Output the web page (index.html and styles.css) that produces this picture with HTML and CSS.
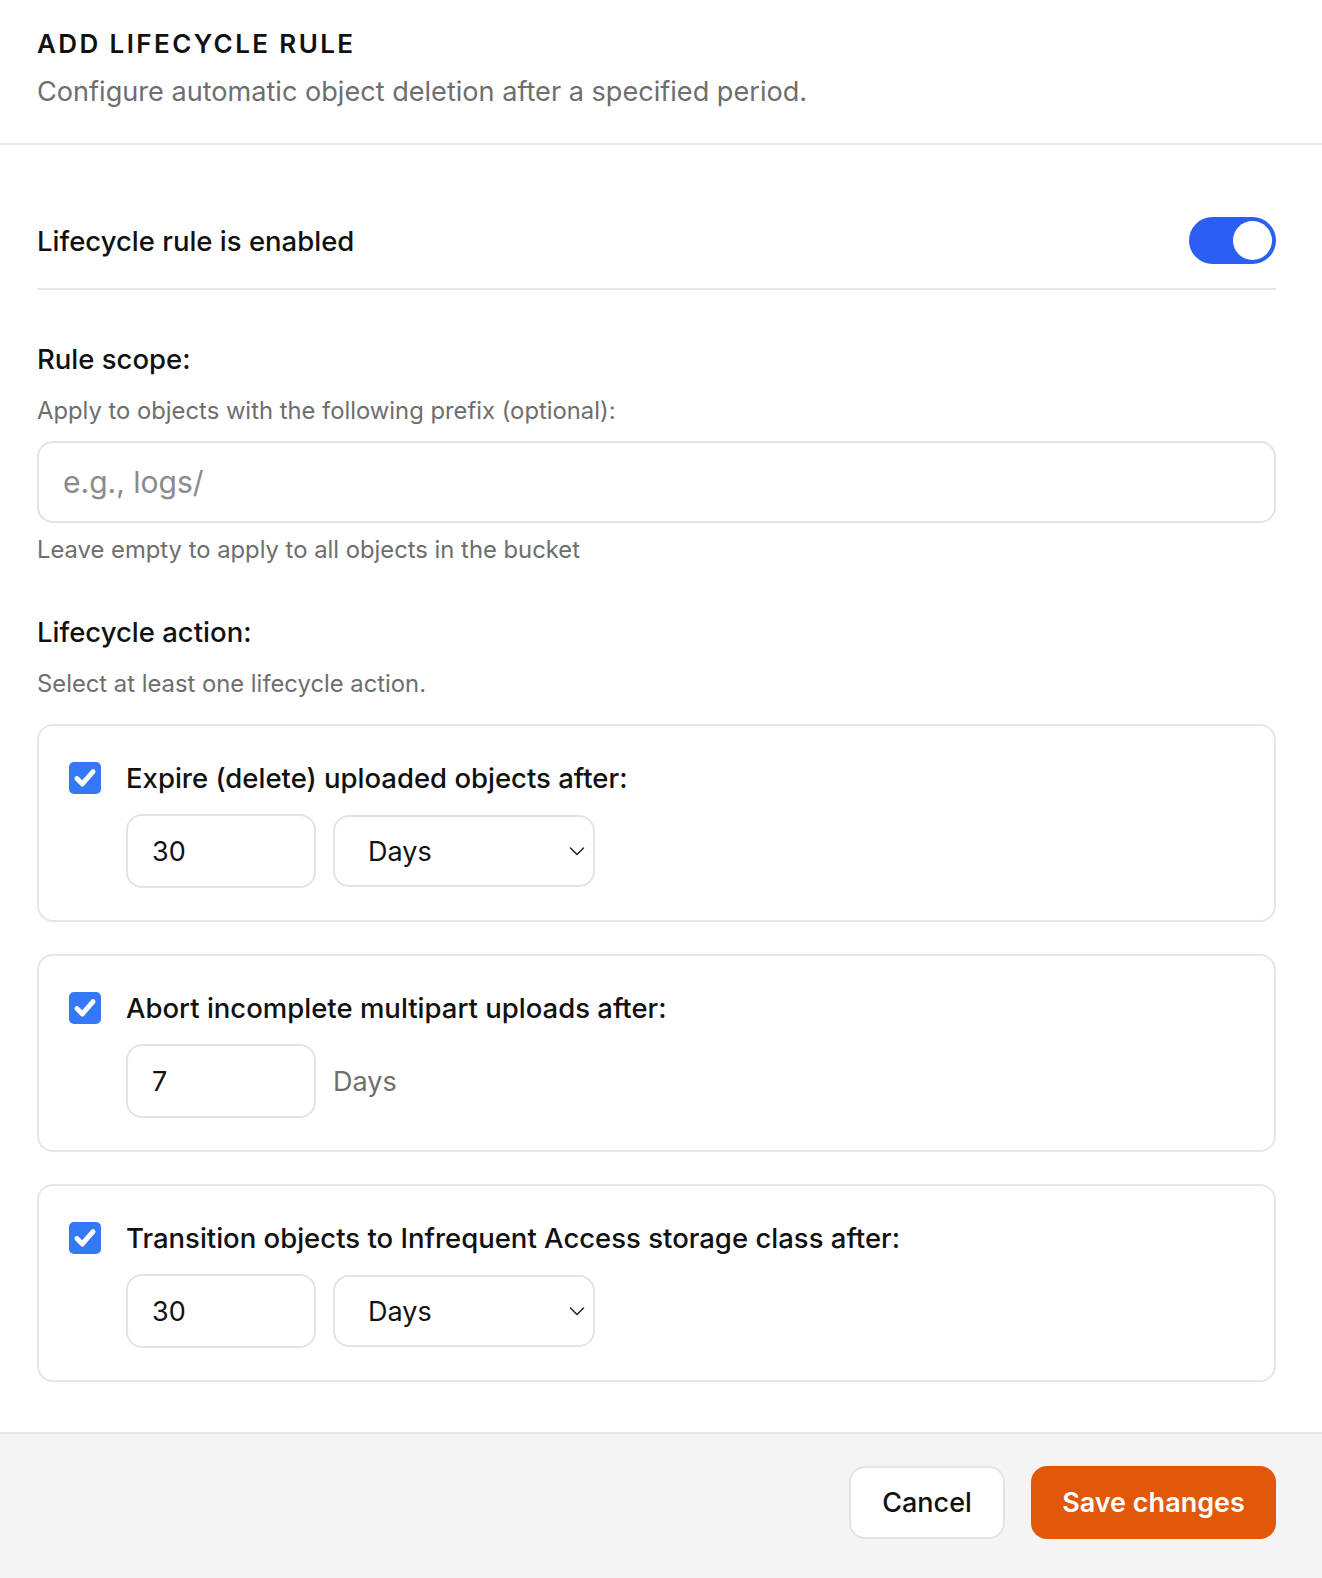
FILE: index.html
```html
<!DOCTYPE html>
<html lang="en">
<head>
    <meta charset="UTF-8">
    <meta name="viewport" content="width=device-width, initial-scale=1.0">
    <title>Add lifecycle rule</title>
    <link rel="stylesheet" href="styles.css">
</head>
<body>
    <div class="modal">
        <header class="modal-header">
            <h1>ADD LIFECYCLE RULE</h1>
            <p>Configure automatic object deletion after a specified period.</p>
        </header>

        <main class="modal-body">
            <div class="enable-row">
                <span>Lifecycle rule is enabled</span>
                <span class="toggle on"><span class="knob"></span></span>
            </div>

            <section class="field">
                <h2>Rule scope:</h2>
                <p class="hint">Apply to objects with the following prefix (optional):</p>
                <input class="text-input" type="text" placeholder="e.g., logs/">
                <p class="hint below">Leave empty to apply to all objects in the bucket</p>
            </section>

            <section class="field">
                <h2>Lifecycle action:</h2>
                <p class="hint">Select at least one lifecycle action.</p>

                <div class="action-card">
                    <label class="action-title">
                        <span class="checkbox"><svg viewBox="0 0 16 16"><path d="M3.4 8.3 6.5 11.4 12.6 4.4" /></svg></span>
                        Expire (delete) uploaded objects after:
                    </label>
                    <div class="action-inputs">
                        <input class="num-input" type="text" value="30">
                        <div class="select">Days
                            <svg viewBox="0 0 16 10"><path d="M1.5 2 8 8.5 14.5 2" /></svg>
                        </div>
                    </div>
                </div>

                <div class="action-card">
                    <label class="action-title">
                        <span class="checkbox"><svg viewBox="0 0 16 16"><path d="M3.4 8.3 6.5 11.4 12.6 4.4" /></svg></span>
                        Abort incomplete multipart uploads after:
                    </label>
                    <div class="action-inputs">
                        <input class="num-input" type="text" value="7">
                        <span class="unit">Days</span>
                    </div>
                </div>

                <div class="action-card">
                    <label class="action-title">
                        <span class="checkbox"><svg viewBox="0 0 16 16"><path d="M3.4 8.3 6.5 11.4 12.6 4.4" /></svg></span>
                        Transition objects to Infrequent Access storage class after:
                    </label>
                    <div class="action-inputs">
                        <input class="num-input" type="text" value="30">
                        <div class="select">Days
                            <svg viewBox="0 0 16 10"><path d="M1.5 2 8 8.5 14.5 2" /></svg>
                        </div>
                    </div>
                </div>
            </section>
        </main>

        <footer class="modal-footer">
            <button class="btn cancel">Cancel</button>
            <button class="btn primary">Save changes</button>
        </footer>
    </div>
</body>
</html>
```

FILE: styles.css
```css
* {
    margin: 0;
    padding: 0;
    box-sizing: border-box;
}

html,
body {
    overflow: hidden;
}

body {
    font-family: 'Inter', 'Noto Sans', sans-serif;
    color: #111;
    background: #fff;
}

.modal {
    width: 100%;
    height: 1578px;
    display: flex;
    flex-direction: column;
}

.modal-header {
    padding: 28px 37px 35px;
    border-bottom: 2px solid #e6e6e6;
}

.modal-header h1 {
    font-size: 26px;
    font-weight: 600;
    letter-spacing: 2.4px;
    line-height: 32px;
}

.modal-header p {
    margin-top: 16px;
    font-size: 27.1px;
    line-height: 32px;
    color: #6e6e6e;
}

.modal-body {
    padding: 72px 46px 0 37px;
    flex: 1 1 auto;
    min-height: 0;
    overflow: hidden;
}

.enable-row {
    display: flex;
    justify-content: space-between;
    align-items: center;
    font-size: 27.5px;
    font-weight: 500;
    padding-bottom: 24px;
    border-bottom: 2px solid #e6e6e6;
}

.toggle {
    width: 87px;
    height: 47px;
    border-radius: 24px;
    background: #2b5ff2;
    display: flex;
    align-items: center;
    justify-content: flex-end;
    padding: 4px;
}

.toggle .knob {
    width: 39px;
    height: 39px;
    border-radius: 50%;
    background: #fff;
}

.field h2 {
    margin-top: 53px;
    font-size: 27.5px;
    font-weight: 500;
    line-height: 32px;
}

.field + .field h2 {
    margin-top: 51px;
}

.hint {
    margin-top: 21px;
    font-size: 23.8px;
    line-height: 30px;
    color: #6e6e6e;
}

.hint.below {
    margin-top: 12px;
}

.text-input {
    display: block;
    width: 100%;
    height: 82px;
    margin-top: 15px;
    padding: 0 24px;
    border: 2px solid #e3e3e3;
    border-radius: 16px;
    font-family: inherit;
    font-size: 30px;
    color: #111;
    outline: none;
}

.text-input::placeholder {
    color: #8a8a8a;
}

.action-card {
    margin-top: 25px;
    border: 2px solid #e6e6e6;
    border-radius: 16px;
    padding: 34px 30px 32px;
}

.action-card + .action-card {
    margin-top: 32px;
}

.action-title {
    display: flex;
    align-items: center;
    gap: 25px;
    font-size: 27.5px;
    font-weight: 500;
    line-height: 36px;
}

.checkbox {
    width: 32px;
    height: 32px;
    border-radius: 5px;
    background: #3478f6;
    display: flex;
    align-items: center;
    justify-content: center;
}

.checkbox svg {
    width: 28px;
    height: 28px;
    fill: none;
    stroke: #fff;
    stroke-width: 2.8;
    stroke-linecap: round;
    stroke-linejoin: round;
}

.action-inputs {
    display: flex;
    align-items: center;
    gap: 17px;
    margin-top: 18px;
    padding-left: 57px;
}

.num-input {
    width: 190px;
    height: 74px;
    padding: 0 24px;
    border: 2px solid #e3e3e3;
    border-radius: 16px;
    font-family: inherit;
    font-size: 27px;
    color: #111;
    outline: none;
}

.select {
    width: 262px;
    height: 72px;
    padding: 0 8px 0 33px;
    border: 2px solid #e3e3e3;
    border-radius: 16px;
    display: flex;
    align-items: center;
    justify-content: space-between;
    font-size: 27px;
}

.select svg {
    width: 16px;
    height: 10px;
    fill: none;
    stroke: #222;
    stroke-width: 1.5;
    stroke-linecap: round;
    stroke-linejoin: round;
}

.unit {
    font-size: 27px;
    color: #6e6e6e;
}

.modal-footer {
    flex: none;
    background: #f4f4f4;
    border-top: 2px solid #e6e6e6;
    padding: 32px 46px 39px 37px;
    display: flex;
    justify-content: flex-end;
    gap: 26px;
}

.btn {
    height: 73px;
    border-radius: 16px;
    font-family: inherit;
    font-size: 27px;
    cursor: pointer;
}

.btn.cancel {
    width: 156px;
    background: #fff;
    border: 2px solid #e3e3e3;
    color: #111;
    font-weight: 500;
}

.btn.primary {
    width: 245px;
    background: #e2580a;
    border: none;
    color: #fff;
    font-weight: 600;
}
```
